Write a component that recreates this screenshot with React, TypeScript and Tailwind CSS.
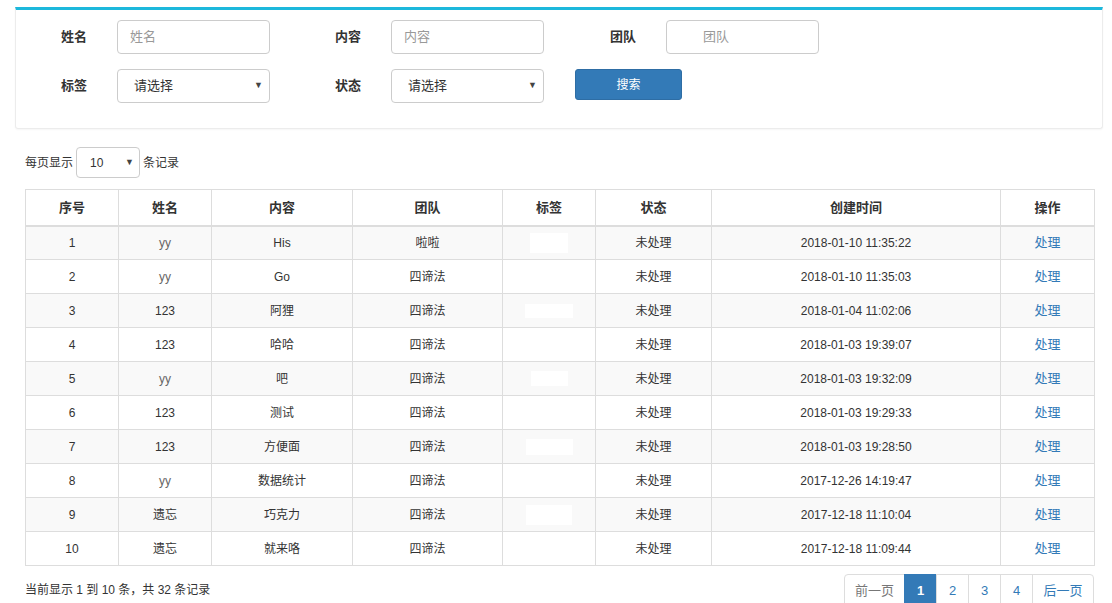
import { Fragment } from "react";

const rows = [
  { id: 1, name: "yy", content: "His", team: "啦啦", tag: "w-[38px] h-[20px]", time: "2018-01-10 11:35:22" },
  { id: 2, name: "yy", content: "Go", team: "四谛法", tag: "", time: "2018-01-10 11:35:03" },
  { id: 3, name: "123", content: "阿狸", team: "四谛法", tag: "w-[48px] h-[14px]", time: "2018-01-04 11:02:06" },
  { id: 4, name: "123", content: "哈哈", team: "四谛法", tag: "", time: "2018-01-03 19:39:07" },
  { id: 5, name: "yy", content: "吧", team: "四谛法", tag: "w-[37px] h-[15px]", time: "2018-01-03 19:32:09" },
  { id: 6, name: "123", content: "测试", team: "四谛法", tag: "", time: "2018-01-03 19:29:33" },
  { id: 7, name: "123", content: "方便面", team: "四谛法", tag: "w-[47px] h-[16px]", time: "2018-01-03 19:28:50" },
  { id: 8, name: "yy", content: "数据统计", team: "四谛法", tag: "", time: "2017-12-26 14:19:47" },
  { id: 9, name: "遗忘", content: "巧克力", team: "四谛法", tag: "w-[46px] h-[20px]", time: "2017-12-18 11:10:04" },
  { id: 10, name: "遗忘", content: "就来咯", team: "四谛法", tag: "", time: "2017-12-18 11:09:44" },
];

const cols = ["w-[93px]", "w-[93px]", "w-[141px]", "w-[150px]", "w-[93px]", "w-[116px]", "w-[289px]", "w-[94px]"];
const heads = ["序号", "姓名", "内容", "团队", "标签", "状态", "创建时间", "操作"];

const Label = ({ text, w }: { text: string; w: string }) => (
  <div className={`${w} shrink-0 pr-[30px] text-right text-[13px] font-bold text-[#333]`}>{text}</div>
);

const Input = ({ ph, pl }: { ph: string; pl: string }) => (
  <div className={`w-[153px] h-[34px] shrink-0 border border-[#ccc] rounded-[4px] bg-white flex items-center ${pl} text-[13px] text-[#999]`}>
    {ph}
  </div>
);

const Select = () => (
  <div className="w-[153px] h-[34px] shrink-0 border border-[#ccc] rounded-[4px] bg-white flex items-center justify-between pl-[16px] pr-[6px] text-[13px] text-[#333]">
    <span>请选择</span>
    <span className="text-[9px] text-[#444]">▼</span>
  </div>
);

export default function App() {
  return (
    <div className="w-[1112px] h-[603px] overflow-hidden bg-white text-[#333] font-['Liberation_Sans','Noto_Sans_CJK_SC',sans-serif]">
      {/* search panel */}
      <div className="mx-[15px] mt-[7px] w-[1088px] border-t-[3px] border-t-[#1cb8dc] border-x border-b border-[#ececec] rounded-b-[3px] shadow-[0_1px_2px_rgba(0,0,0,0.04)] pt-[10px] pb-[25px]">
        <div className="flex items-center h-[34px]">
          <Label text="姓名" w="w-[101px]" />
          <Input ph="姓名" pl="pl-[12px]" />
          <Label text="内容" w="w-[121px]" />
          <Input ph="内容" pl="pl-[12px]" />
          <Label text="团队" w="w-[122px]" />
          <Input ph="团队" pl="pl-[36px]" />
        </div>
        <div className="flex items-center h-[34px] mt-[15px]">
          <Label text="标签" w="w-[101px]" />
          <Select />
          <Label text="状态" w="w-[121px]" />
          <Select />
          <div className="ml-[31px] w-[107px] h-[31px] -mt-[3px] rounded-[3px] bg-[#337ab7] border border-[#2e6da4] text-white text-[12px] flex items-center justify-center">
            搜索
          </div>
        </div>
      </div>

      {/* page size */}
      <div className="flex items-center ml-[25px] mt-[18px] h-[31px] text-[12px]">
        <span>每页显示</span>
        <div className="ml-[3px] w-[64px] h-[31px] border border-[#ccc] rounded-[4px] flex items-center justify-between pl-[13px] pr-[5px]">
          <span>10</span>
          <span className="text-[9px] text-[#444]">▼</span>
        </div>
        <span className="ml-[3px]">条记录</span>
      </div>

      {/* table */}
      <table className="ml-[25px] mt-[11px] w-[1069px] table-fixed border-collapse border border-[#ddd] text-[12px]">
        <colgroup>
          {cols.map((c, i) => (
            <col key={i} className={c} />
          ))}
        </colgroup>
        <thead>
          <tr className="h-[36px]">
            {heads.map((h) => (
              <th key={h} className="border border-[#ddd] border-b-2 text-center font-bold text-[13px] text-[#333]">
                {h}
              </th>
            ))}
          </tr>
        </thead>
        <tbody>
          {rows.map((r, i) => (
            <Fragment key={r.id}>
              <tr className={`h-[34px] ${i % 2 === 0 ? "bg-[#f9f9f9]" : "bg-white"}`}>
                <td className="border border-[#ddd] text-center">{r.id}</td>
                <td className={`border border-[#ddd] text-center ${r.name === "yy" ? "text-[#666]" : ""}`}>{r.name}</td>
                <td className="border border-[#ddd] text-center">{r.content}</td>
                <td className="border border-[#ddd] text-center">{r.team}</td>
                <td className="border border-[#ddd] text-center">
                  {r.tag && <div className={`${r.tag} bg-white mx-auto`} />}
                </td>
                <td className="border border-[#ddd] text-center">未处理</td>
                <td className="border border-[#ddd] text-center">{r.time}</td>
                <td className="border border-[#ddd] text-center text-[#337ab7] text-[13px]">处理</td>
              </tr>
            </Fragment>
          ))}
        </tbody>
      </table>

      {/* footer */}
      <div className="flex items-start justify-between ml-[25px] w-[1069px] mt-[8px]">
        <div className="text-[12px] mt-[7px]">当前显示 1 到 10 条，共 32 条记录</div>
        <div className="flex h-[34px] text-[13px]">
          <div className="w-[61px] border border-[#ddd] rounded-l-[4px] flex items-center justify-center text-[#777]">前一页</div>
          <div className="w-[33px] bg-[#337ab7] border border-[#337ab7] -ml-px flex items-center justify-center text-white font-bold">1</div>
          <div className="w-[33px] border border-[#ddd] -ml-px flex items-center justify-center text-[#337ab7]">2</div>
          <div className="w-[33px] border border-[#ddd] -ml-px flex items-center justify-center text-[#337ab7]">3</div>
          <div className="w-[33px] border border-[#ddd] -ml-px flex items-center justify-center text-[#337ab7]">4</div>
          <div className="w-[62px] border border-[#ddd] -ml-px rounded-r-[4px] flex items-center justify-center text-[#337ab7]">后一页</div>
        </div>
      </div>
    </div>
  );
}
